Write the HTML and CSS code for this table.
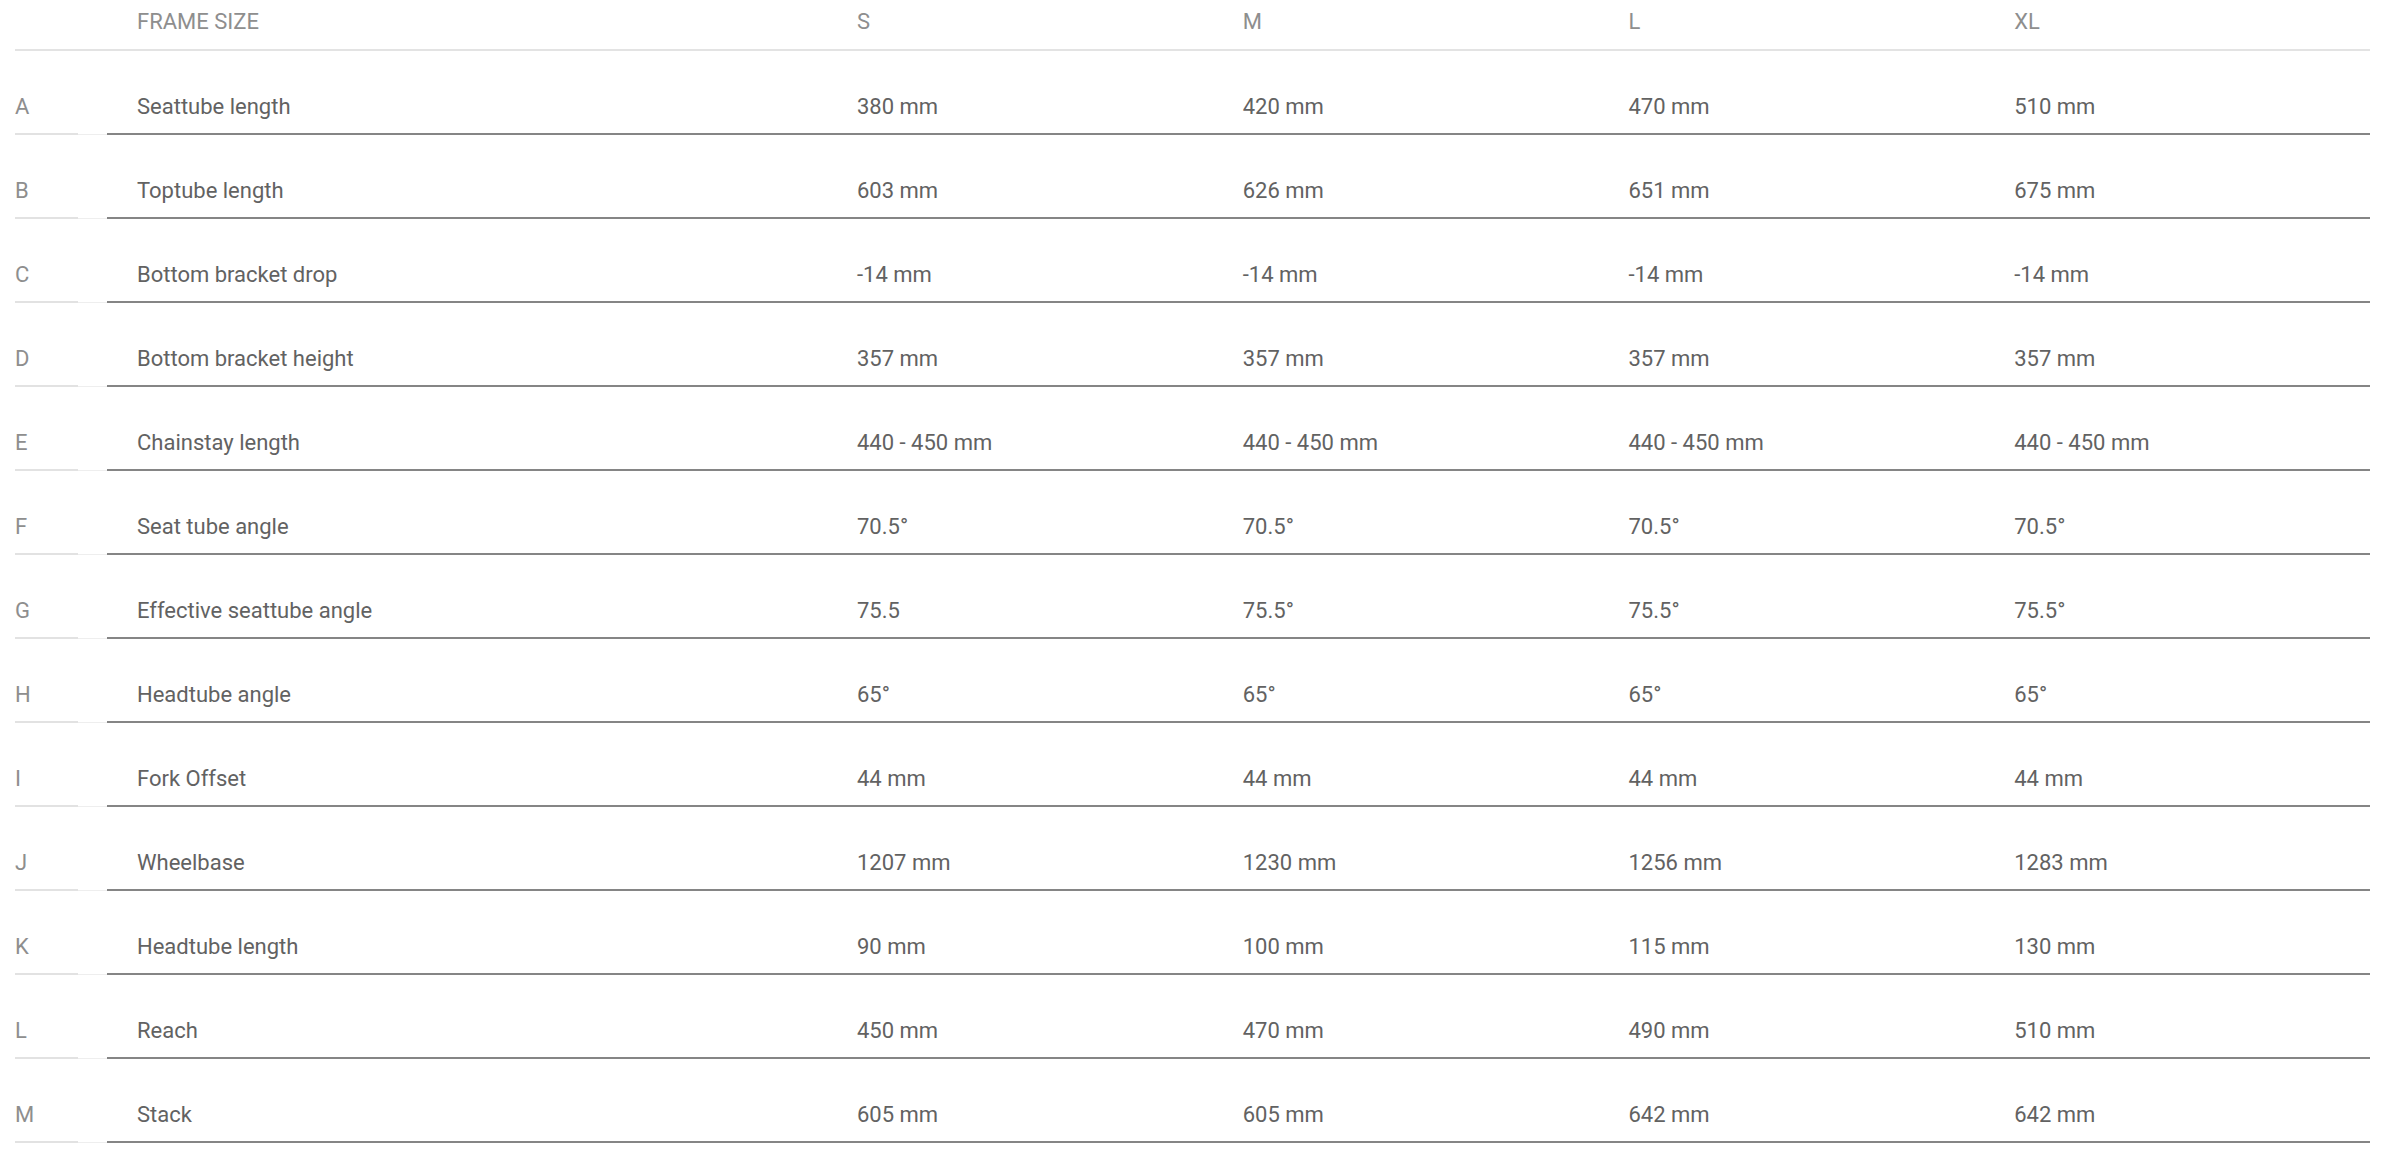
FILE: index.html
```html
<!DOCTYPE html>
<html lang="en">
<head>
<meta charset="utf-8">
<title>Geometry</title>
<link rel="stylesheet" href="styles.css">
</head>
<body>
<div class="geo">
  <div class="row head">
    <div class="cell letter"></div>
    <div class="cell label">FRAME SIZE</div>
    <div class="cell">S</div>
    <div class="cell">M</div>
    <div class="cell">L</div>
    <div class="cell">XL</div>
  </div>
  <div class="row"><div class="cell letter">A</div><div class="cell label">Seattube length</div><div class="cell">380 mm</div><div class="cell">420 mm</div><div class="cell">470 mm</div><div class="cell">510 mm</div></div>
  <div class="row"><div class="cell letter">B</div><div class="cell label">Toptube length</div><div class="cell">603 mm</div><div class="cell">626 mm</div><div class="cell">651 mm</div><div class="cell">675 mm</div></div>
  <div class="row"><div class="cell letter">C</div><div class="cell label">Bottom bracket drop</div><div class="cell">-14 mm</div><div class="cell">-14 mm</div><div class="cell">-14 mm</div><div class="cell">-14 mm</div></div>
  <div class="row"><div class="cell letter">D</div><div class="cell label">Bottom bracket height</div><div class="cell">357 mm</div><div class="cell">357 mm</div><div class="cell">357 mm</div><div class="cell">357 mm</div></div>
  <div class="row"><div class="cell letter">E</div><div class="cell label">Chainstay length</div><div class="cell">440 - 450 mm</div><div class="cell">440 - 450 mm</div><div class="cell">440 - 450 mm</div><div class="cell">440 - 450 mm</div></div>
  <div class="row"><div class="cell letter">F</div><div class="cell label">Seat tube angle</div><div class="cell">70.5°</div><div class="cell">70.5°</div><div class="cell">70.5°</div><div class="cell">70.5°</div></div>
  <div class="row"><div class="cell letter">G</div><div class="cell label">Effective seattube angle</div><div class="cell">75.5</div><div class="cell">75.5°</div><div class="cell">75.5°</div><div class="cell">75.5°</div></div>
  <div class="row"><div class="cell letter">H</div><div class="cell label">Headtube angle</div><div class="cell">65°</div><div class="cell">65°</div><div class="cell">65°</div><div class="cell">65°</div></div>
  <div class="row"><div class="cell letter">I</div><div class="cell label">Fork Offset</div><div class="cell">44 mm</div><div class="cell">44 mm</div><div class="cell">44 mm</div><div class="cell">44 mm</div></div>
  <div class="row"><div class="cell letter">J</div><div class="cell label">Wheelbase</div><div class="cell">1207 mm</div><div class="cell">1230 mm</div><div class="cell">1256 mm</div><div class="cell">1283 mm</div></div>
  <div class="row"><div class="cell letter">K</div><div class="cell label">Headtube length</div><div class="cell">90 mm</div><div class="cell">100 mm</div><div class="cell">115 mm</div><div class="cell">130 mm</div></div>
  <div class="row"><div class="cell letter">L</div><div class="cell label">Reach</div><div class="cell">450 mm</div><div class="cell">470 mm</div><div class="cell">490 mm</div><div class="cell">510 mm</div></div>
  <div class="row"><div class="cell letter">M</div><div class="cell label">Stack</div><div class="cell">605 mm</div><div class="cell">605 mm</div><div class="cell">642 mm</div><div class="cell">642 mm</div></div>
</div>
</body>
</html>
```
FILE: styles.css
```css
html, body {
  margin: 0;
  padding: 0;
  background: #ffffff;
}

body {
  font-family: Roboto, "Liberation Sans", Arial, sans-serif;
  font-size: 22px;
  font-weight: 400;
  color: #626262;
}

.geo {
  padding: 0 30px 0 15px;
}

.row {
  display: grid;
  grid-template-columns: 92px 720px repeat(4, 1fr);
}

.cell {
  padding: 41px 0 11px 30px;
  line-height: 30px;
  border-bottom: 2px solid #858585;
  white-space: nowrap;
}

.cell.letter {
  padding-left: 0;
  color: #8e8e8e;
  border-bottom: 0;
  padding-bottom: 13px;
  background:
    linear-gradient(#e2e2e2, #e2e2e2) left bottom / 63px 2px no-repeat,
    linear-gradient(#eeeeee, #eeeeee) right bottom / 29px 1px no-repeat;
}

.row.head {
  border-bottom: 2px solid #e3e3e3;
  color: #8e8e8e;
}

.row.head .cell {
  padding-top: 7px;
  padding-bottom: 12px;
  border-bottom: 0;
  background: none;
}
```
